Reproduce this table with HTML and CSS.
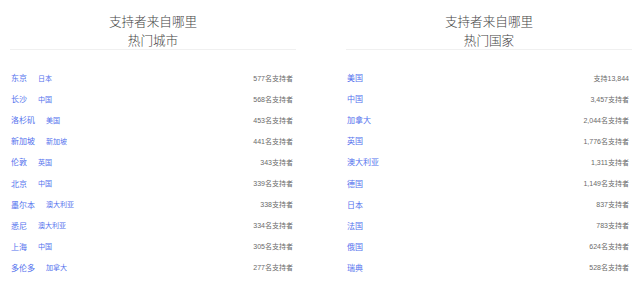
FILE: index.html
```html
<!DOCTYPE html>
<html lang="zh-CN">
<head>
<meta charset="utf-8">
<title>支持者来自哪里</title>
<link rel="stylesheet" href="styles.css">
</head>
<body>
<div class="wrap">
  <section class="col">
    <header class="head">
      <h2 class="t1">支持者来自哪里</h2>
      <h3 class="t2">热门城市</h3>
    </header>
    <ul class="list">
      <li class="row"><span class="place"><a class="city">东京</a><a class="country">日本</a></span><span class="count">577名支持者</span></li>
      <li class="row"><span class="place"><a class="city">长沙</a><a class="country">中国</a></span><span class="count">568名支持者</span></li>
      <li class="row"><span class="place"><a class="city">洛杉矶</a><a class="country">美国</a></span><span class="count">453名支持者</span></li>
      <li class="row"><span class="place"><a class="city">新加坡</a><a class="country">新加坡</a></span><span class="count">441名支持者</span></li>
      <li class="row"><span class="place"><a class="city">伦敦</a><a class="country">英国</a></span><span class="count">343支持者</span></li>
      <li class="row"><span class="place"><a class="city">北京</a><a class="country">中国</a></span><span class="count">339名支持者</span></li>
      <li class="row"><span class="place"><a class="city">墨尔本</a><a class="country">澳大利亚</a></span><span class="count">338支持者</span></li>
      <li class="row"><span class="place"><a class="city">悉尼</a><a class="country">澳大利亚</a></span><span class="count">334名支持者</span></li>
      <li class="row"><span class="place"><a class="city">上海</a><a class="country">中国</a></span><span class="count">305名支持者</span></li>
      <li class="row"><span class="place"><a class="city">多伦多</a><a class="country">加拿大</a></span><span class="count">277名支持者</span></li>
    </ul>
  </section>
  <section class="col">
    <header class="head">
      <h2 class="t1">支持者来自哪里</h2>
      <h3 class="t2">热门国家</h3>
    </header>
    <ul class="list">
      <li class="row"><a class="city">美国</a><span class="count">支持13,844</span></li>
      <li class="row"><a class="city">中国</a><span class="count">3,457支持者</span></li>
      <li class="row"><a class="city">加拿大</a><span class="count">2,044名支持者</span></li>
      <li class="row"><a class="city">英国</a><span class="count">1,776名支持者</span></li>
      <li class="row"><a class="city">澳大利亚</a><span class="count">1,311支持者</span></li>
      <li class="row"><a class="city">德国</a><span class="count">1,149名支持者</span></li>
      <li class="row"><a class="city">日本</a><span class="count">837支持者</span></li>
      <li class="row"><a class="city">法国</a><span class="count">783支持者</span></li>
      <li class="row"><a class="city">俄国</a><span class="count">624名支持者</span></li>
      <li class="row"><a class="city">瑞典</a><span class="count">528名支持者</span></li>
    </ul>
  </section>
</div>
</body>
</html>
```
FILE: styles.css
```css
html, body {
  margin: 0;
  padding: 0;
  background: #ffffff;
}
body {
  font-family: "Liberation Sans", "Noto Sans CJK SC", sans-serif;
  color: #444;
}
.wrap {
  display: flex;
  gap: 50px;
  padding: 0 8px 0 10px;
}
.col {
  flex: 1 1 0;
  min-width: 0;
}
.head {
  padding-top: 11px;
  border-bottom: 1px solid #f0f0f0;
  text-align: center;
}
.t1, .t2 {
  margin: 0;
  font-weight: 300;
  font-family: "Noto Sans CJK SC", sans-serif;
  color: #444;
  font-size: 12.6px;
}
.t1 {
  line-height: 20px;
}
.t2 {
  line-height: 18px;
}
.list {
  list-style: none;
  margin: 17px 0 0;
  padding: 0 3px 0 1px;
}
.row {
  display: flex;
  align-items: center;
  justify-content: space-between;
  height: 21.1px;
}
.place {
  display: flex;
  align-items: center;
  gap: 11px;
}
.city {
  font-family: "Noto Sans CJK SC", sans-serif;
  font-size: 8px;
  color: #5472ee;
}
.country {
  font-family: "Noto Sans CJK SC", sans-serif;
  font-size: 7px;
  color: #5472ee;
}
.count {
  font-size: 7px;
  color: #6a6a6a;
}
```
